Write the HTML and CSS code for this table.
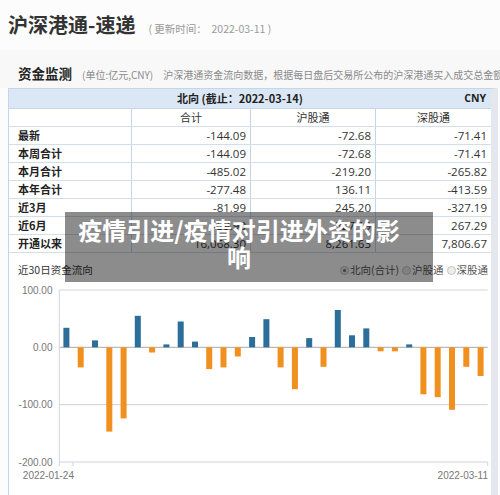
FILE: index.html
```html
<!DOCTYPE html>
<html lang="zh-CN">
<head>
<meta charset="utf-8">
<title>沪深港通-速递</title>
<link rel="stylesheet" href="styles.css">
</head>
<body>
<header class="top">
  <h1 class="title">沪深港通-速递</h1>
  <span class="updated">( 更新时间：&nbsp; 2022-03-11 )</span>
</header>
<div class="sub">
  <span class="sub-title">资金监测</span>
  <span class="sub-unit">(单位:亿元,CNY)</span>
  <span class="sub-desc">沪深港通资金流向数据，根据每日盘后交易所公布的沪深港通买入成交总金额和卖出成交总金额计算</span>
</div>
<section class="panel">
  <div class="thead">
    <span class="thead-title">北向 (截止：2022-03-14)</span>
    <span class="thead-cny">CNY</span>
  </div>
  <div class="row colhead"><div class="c0"></div><div class="c1">合计</div><div class="c2">沪股通</div><div class="c3">深股通</div></div>
  <div class="row"><div class="c0">最新</div><div class="c1">-144.09</div><div class="c2">-72.68</div><div class="c3">-71.41</div></div>
  <div class="row"><div class="c0">本周合计</div><div class="c1">-144.09</div><div class="c2">-72.68</div><div class="c3">-71.41</div></div>
  <div class="row"><div class="c0">本月合计</div><div class="c1">-485.02</div><div class="c2">-219.20</div><div class="c3">-265.82</div></div>
  <div class="row"><div class="c0">本年合计</div><div class="c1">-277.48</div><div class="c2">136.11</div><div class="c3">-413.59</div></div>
  <div class="row"><div class="c0">近3月</div><div class="c1">-81.99</div><div class="c2">245.20</div><div class="c3">-327.19</div></div>
  <div class="row"><div class="c0">近6月</div><div class="c1">-59.90</div><div class="c2">-327.19</div><div class="c3">267.29</div></div>
  <div class="row"><div class="c0">开通以来</div><div class="c1">16,068.30</div><div class="c2">8,261.63</div><div class="c3">7,806.67</div></div>
  <div class="chart-head">
    <span class="chart-title">近30日资金流向</span>
    <div class="legend">
      <span class="radio on"></span><span class="legend-text">北向(合计)</span>
      <span class="radio"></span><span class="legend-text">沪股通</span>
      <span class="radio"></span><span class="legend-text">深股通</span>
    </div>
  </div>
  <svg class="chart" width="482" height="215" viewBox="9 280 482 215" xmlns="http://www.w3.org/2000/svg">
    <g class="grid">
      <line x1="59.3" y1="290" x2="487.7" y2="290" stroke="#d6d6d6"/>
      <line x1="59.3" y1="404.7" x2="487.7" y2="404.7" stroke="#cfcfcf"/>
      <line x1="59.3" y1="347.3" x2="487.7" y2="347.3" stroke="#a9a9a9"/>
      <line x1="59.3" y1="462" x2="487.7" y2="462" stroke="#cdd5e0"/>
      <line x1="59.3" y1="290" x2="59.3" y2="466" stroke="#cdd5e0"/>
      <line x1="73" y1="462" x2="73" y2="466" stroke="#cdd5e0"/>
      <line x1="487.7" y1="462" x2="487.7" y2="466" stroke="#cdd5e0"/>
    </g>
    <g class="ylabels" font-family="Liberation Sans, Arial, sans-serif" font-size="10" fill="#777" text-anchor="end">
      <text x="52.5" y="293.5">100.00</text>
      <text x="52.5" y="350.8">0.00</text>
      <text x="52.5" y="408.2">-100.00</text>
      <text x="52.5" y="465.5">-200.00</text>
    </g>
    <g class="xlabels" font-family="Liberation Sans, Arial, sans-serif" font-size="10" fill="#777" text-anchor="end">
      <text x="74" y="479">2022-01-24</text>
      <text x="488" y="479">2022-03-11</text>
    </g>
    <g fill="#2b6e9a">
      <rect x="63.4" y="327.8" width="6" height="19.5"/>
      <rect x="92.0" y="340.4" width="6" height="6.9"/>
      <rect x="134.8" y="315.8" width="6" height="31.5"/>
      <rect x="163.4" y="344.4" width="6" height="2.9"/>
      <rect x="177.7" y="321.5" width="6" height="25.8"/>
      <rect x="192.0" y="341.6" width="6" height="5.7"/>
      <rect x="249.1" y="337.0" width="6" height="10.3"/>
      <rect x="263.4" y="319.2" width="6" height="28.1"/>
      <rect x="306.2" y="338.1" width="6" height="9.2"/>
      <rect x="334.8" y="310.0" width="6" height="37.3"/>
      <rect x="349.0" y="335.3" width="6" height="12.0"/>
      <rect x="363.3" y="328.4" width="6" height="18.9"/>
      <rect x="406.2" y="344.4" width="6" height="2.9"/>
    </g>
    <g fill="#f0901f">
      <rect x="77.7" y="347.3" width="6" height="20.1"/>
      <rect x="106.3" y="347.3" width="6" height="84.3"/>
      <rect x="120.6" y="347.3" width="6" height="71.1"/>
      <rect x="149.1" y="347.3" width="6" height="5.2"/>
      <rect x="206.2" y="347.3" width="6" height="21.8"/>
      <rect x="220.5" y="347.3" width="6" height="20.1"/>
      <rect x="234.8" y="347.3" width="6" height="9.2"/>
      <rect x="277.6" y="347.3" width="6" height="20.1"/>
      <rect x="291.9" y="347.3" width="6" height="41.9"/>
      <rect x="320.5" y="347.3" width="6" height="19.5"/>
      <rect x="377.6" y="347.3" width="6" height="4.0"/>
      <rect x="391.9" y="347.3" width="6" height="4.0"/>
      <rect x="420.4" y="347.3" width="6" height="47.0"/>
      <rect x="434.7" y="347.3" width="6" height="49.9"/>
      <rect x="449.0" y="347.3" width="6" height="62.5"/>
      <rect x="463.3" y="347.3" width="6" height="19.5"/>
      <rect x="477.6" y="347.3" width="6" height="28.7"/>
    </g>
  </svg>
</section>
<div class="overlay">疫情引进/疫情对引进外资的影响</div>
</body>
</html>
```

FILE: styles.css
```css
* { box-sizing: border-box; }

html, body {
  margin: 0;
  padding: 0;
}

body {
  width: 500px;
  height: 495px;
  overflow: hidden;
  position: relative;
  background: #fcfcfc;
  font-family: "Noto Sans CJK SC", "Noto Sans", sans-serif;
  color: #333;
}

.top {
  height: 50px;
  display: flex;
  align-items: baseline;
  padding: 13px 8px 0 8px;
}

.title {
  margin: 0;
  font-size: 20px;
  line-height: 24px;
  font-weight: 700;
  color: #333;
}

.updated {
  margin-left: 13px;
  font-size: 10.5px;
  color: #9a9a9a;
  white-space: pre;
}

.sub {
  height: 38px;
  display: flex;
  align-items: baseline;
  padding: 14px 0 0 18px;
  white-space: nowrap;
  overflow: hidden;
  background: #f8f8f8;
}

.sub-title {
  font-size: 13.5px;
  line-height: 18px;
  font-weight: 700;
  color: #222;
}

.sub-unit {
  margin-left: 10px;
  font-size: 10px;
  color: #8a8a8a;
}

.sub-desc {
  margin-left: 10px;
  font-size: 10px;
  color: #8a8a8a;
}

.panel {
  margin-left: 8px;
  width: 490px;
  height: 407px;
  background: #fff;
  border-top: 1px solid #c5d5ea;
  border-left: 1px solid #c5d5ea;
  border-right: 7px solid #e5e7ee;
}

.thead {
  height: 20px;
  display: flex;
  align-items: center;
  background: #dce7f5;
  border-bottom: 1px solid #c5d5ea;
  font-size: 11px;
  font-weight: 700;
  color: #222;
}

.thead-title {
  flex: 1;
  padding-left: 168px;
  line-height: 19px;
}

.thead-cny {
  padding-right: 5px;
  font-family: "Open Sans", "Noto Sans CJK SC", sans-serif;
  font-size: 10.5px;
  line-height: 19px;
}

.row {
  display: grid;
  grid-template-columns: 123px 119px 125px 1fr;
  height: 18px;
  border-bottom: 1px solid #d3deec;
}

.row > div {
  line-height: 17px;
  font-size: 11.5px;
  font-family: "Open Sans", "Noto Sans CJK SC", sans-serif;
  color: #333;
  text-align: right;
  padding-right: 4px;
  white-space: nowrap;
}

.row > .c0 {
  text-align: left;
  padding-left: 9px;
  font-family: "Noto Sans CJK SC", sans-serif;
  font-size: 11px;
  font-weight: 700;
  color: #222;
  border-right: 1px solid #c5d5ea;
}

.row > .c1,
.row > .c2 {
  border-right: 1px solid #c5d5ea;
}

.colhead > div {
  text-align: center;
  font-family: "Noto Sans CJK SC", sans-serif;
  font-size: 11px;
  padding-right: 0;
}

.chart-head {
  height: 27px;
  display: flex;
  justify-content: space-between;
  align-items: flex-start;
  padding: 10px 3px 0 9px;
}

.chart-title {
  font-size: 10.5px;
  line-height: 14px;
  color: #333;
}

.legend {
  display: flex;
  align-items: center;
  height: 14px;
  font-size: 10.5px;
  color: #555;
}

.radio {
  width: 9px;
  height: 9px;
  border-radius: 50%;
  border: 1px solid #c4c4c4;
  background: #ececec;
  margin-right: 1px;
  position: relative;
}

.radio.on::after {
  content: "";
  position: absolute;
  left: 2px;
  top: 2px;
  width: 3px;
  height: 3px;
  border-radius: 50%;
  background: #777;
}

.legend-text {
  line-height: 14px;
  margin-right: 3px;
}

.legend-text:last-child {
  margin-right: 0;
}

.chart {
  display: block;
}

.overlay {
  position: absolute;
  left: 65px;
  top: 212px;
  width: 368px;
  height: 70px;
  padding: 4px 30px 0 10px;
  background: rgba(0, 0, 0, 0.45);
  color: #fff;
  font-family: "Noto Sans CJK SC", sans-serif;
  font-size: 24px;
  font-weight: 700;
  line-height: 27px;
  text-align: center;
}
```
